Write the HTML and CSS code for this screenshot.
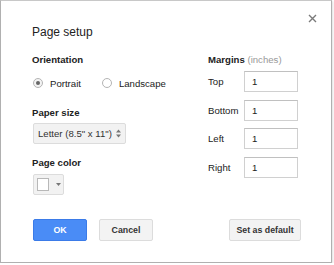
FILE: index.html
```html
<!DOCTYPE html>
<html>
<head>
<meta charset="utf-8">
<link rel="stylesheet" href="styles.css">
</head>
<body>
<div class="dialog">
  <button class="close" aria-label="Close">
    <svg width="9" height="9" viewBox="0 0 9 9"><path d="M1 1L8 8M8 1L1 8" stroke="#7a7a7a" stroke-width="1.4" fill="none"/></svg>
  </button>
  <div class="title">Page setup</div>
  <div class="body">
    <div class="left">
      <div class="label">Orientation</div>
      <div class="radios">
        <label class="radio"><span class="circle checked"></span><span>Portrait</span></label>
        <label class="radio"><span class="circle"></span><span>Landscape</span></label>
      </div>
      <div class="label paper">Paper size</div>
      <div class="select">
        <span>Letter (8.5" x 11")</span>
        <svg width="5" height="9" viewBox="0 0 5 9"><path d="M0 3.6L2.5 0.6L5 3.6Z M0 5.4L2.5 8.4L5 5.4Z" fill="#777"/></svg>
      </div>
      <div class="label pcolor">Page color</div>
      <div class="colorbtn">
        <span class="swatch"></span>
        <svg width="5" height="3" viewBox="0 0 5 3"><path d="M0 0L5 0L2.5 3Z" fill="#777"/></svg>
      </div>
    </div>
    <div class="right">
      <div class="label">Margins <span class="unit">(inches)</span></div>
      <div class="margins">
        <div class="mrow"><span class="mlabel">Top</span><span class="input">1</span></div>
        <div class="mrow"><span class="mlabel">Bottom</span><span class="input">1</span></div>
        <div class="mrow"><span class="mlabel">Left</span><span class="input">1</span></div>
        <div class="mrow"><span class="mlabel">Right</span><span class="input">1</span></div>
      </div>
    </div>
  </div>
  <div class="footer">
    <button class="btn ok">OK</button>
    <button class="btn">Cancel</button>
    <button class="btn default">Set as default</button>
  </div>
</div>
</body>
</html>
```

FILE: styles.css
```css
html, body {
  margin: 0;
  padding: 0;
  background: #fff;
}
body {
  font-family: "Liberation Sans", Arial, sans-serif;
  color: #222;
  font-size: 9.6px;
}
.dialog {
  position: relative;
  box-sizing: border-box;
  width: 332px;
  height: 263px;
  border: 1px solid #b0b0b0;
  border-top-color: #c8c8c8;
  box-shadow: 1px 1px 2px rgba(0,0,0,0.12);
  padding: 24px 30px 0 31px;
}
.close {
  position: absolute;
  top: 13px;
  right: 14px;
  width: 9px;
  height: 9px;
  padding: 0;
  border: 0;
  background: none;
  display: block;
}
.close svg { display: block; }
.title {
  font-size: 12px;
  line-height: 14px;
  color: #222;
}
.body {
  display: flex;
  margin-top: 15px;
}
.label {
  font-weight: bold;
  line-height: 12px;
  color: #222;
}
.unit {
  font-weight: normal;
  color: #999;
}
.left {
  width: 176px;
  display: flex;
  flex-direction: column;
  align-items: flex-start;
}
.radios {
  display: flex;
  margin-top: 10px;
  height: 14px;
  align-items: center;
  padding-left: 1px;
  gap: 21px;
}
.radio {
  display: flex;
  align-items: center;
  gap: 7px;
}
.circle {
  box-sizing: border-box;
  width: 10px;
  height: 10px;
  border-radius: 50%;
  border: 1px solid #b4b4b4;
  background: #fff;
  display: flex;
  align-items: center;
  justify-content: center;
}
.circle.checked {
  background: #f3f3f3;
}
.circle.checked::after {
  content: "";
  width: 4px;
  height: 4px;
  border-radius: 50%;
  background: #666;
}
.paper { margin-top: 17px; }
.select {
  box-sizing: border-box;
  margin-top: 4px;
  margin-left: 1px;
  width: 93px;
  height: 21px;
  background: #f2f2f2;
  border: 1px solid #dcdcdc;
  border-radius: 2px;
  display: flex;
  align-items: center;
  justify-content: space-between;
  padding: 0 4px 0 4px;
  color: #333;
}
.select svg { display: block; }
.pcolor { margin-top: 13px; }
.colorbtn {
  box-sizing: border-box;
  margin-top: 5px;
  margin-left: 1px;
  width: 31px;
  height: 21px;
  background: #f2f2f2;
  border: 1px solid #dcdcdc;
  border-radius: 2px;
  display: flex;
  align-items: center;
  padding-left: 3px;
  gap: 7px;
}
.swatch {
  box-sizing: border-box;
  width: 12px;
  height: 13px;
  background: #fff;
  border: 1px solid #b8b8b8;
}
.colorbtn svg { display: block; }
.right {
  display: flex;
  flex-direction: column;
}
.margins {
  display: flex;
  flex-direction: column;
  gap: 7.7px;
  margin-top: 5px;
}
.mrow {
  display: flex;
  align-items: center;
}
.mlabel {
  width: 36px;
}
.input {
  box-sizing: border-box;
  width: 54px;
  height: 21px;
  border: 1px solid #d0d0d0;
  border-top-color: #c0c0c0;
  padding-left: 7px;
  display: flex;
  align-items: center;
  color: #222;
}
.footer {
  display: flex;
  margin-top: 24px;
  padding-left: 1px;
  gap: 12px;
}
.btn {
  box-sizing: border-box;
  width: 54px;
  height: 22px;
  border: 1px solid #dcdcdc;
  border-radius: 2px;
  background: #f3f3f3;
  font-family: "Liberation Sans", Arial, sans-serif;
  font-size: 8.8px;
  font-weight: bold;
  color: #333;
  padding: 0;
}
.btn.ok {
  background: #4a8cf6;
  border-color: #3b7be8;
  color: #fff;
}
.btn.default {
  width: 72px;
  margin-left: auto;
}
```
